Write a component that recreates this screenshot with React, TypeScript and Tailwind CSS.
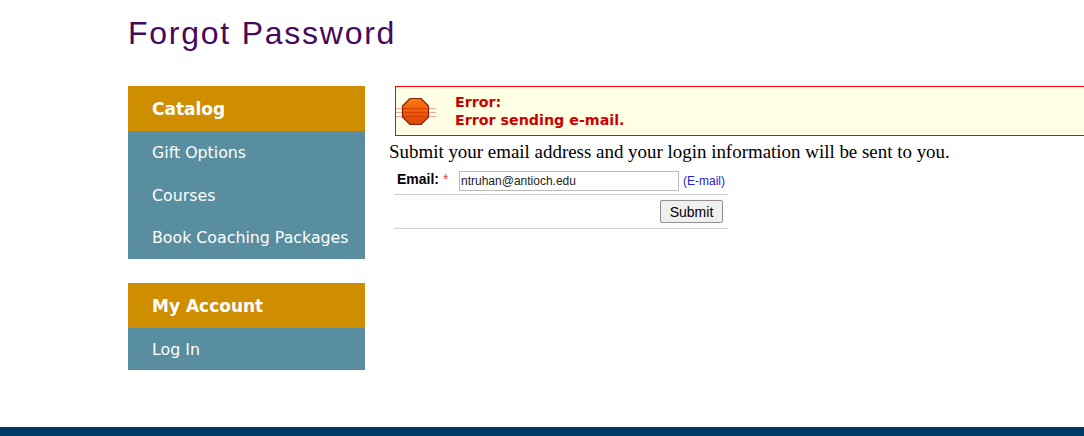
const catalogLinks = ['Gift Options', 'Courses', 'Book Coaching Packages'];
const accountLinks = ['Log In'];

const StopIcon = () => (
  <svg width="40" height="46" viewBox="0 0 40 46" className="block">
    <defs>
      <linearGradient id="stopFill" x1="0" y1="0" x2="0" y2="1">
        <stop offset="0" stopColor="#fb7a10" />
        <stop offset="0.55" stopColor="#ee5a06" />
        <stop offset="1" stopColor="#d94400" />
      </linearGradient>
    </defs>
    <g stroke="#f7a8a0" strokeWidth="1">
      <line x1="0" y1="21.5" x2="40" y2="21.5" />
      <line x1="0" y1="25.5" x2="40" y2="25.5" />
      <line x1="0" y1="29.5" x2="40" y2="29.5" />
    </g>
    <polygon points="14,11.5 25,11.5 32.5,19 32.5,30 25,37.5 14,37.5 6.5,30 6.5,19" fill="url(#stopFill)" stroke="#8c1f10" strokeWidth="1.2" strokeLinejoin="round" />
    <g stroke="#cf3c04" strokeWidth="1" opacity="0.8">
      <line x1="7" y1="21.5" x2="32" y2="21.5" />
      <line x1="7" y1="25.5" x2="32" y2="25.5" />
      <line x1="7" y1="29.5" x2="32" y2="29.5" />
    </g>
  </svg>
);

const SideMenu = ({ title, links }: { title: string; links: string[] }) => (
  <div className="w-[237px]">
    <div className="h-[45px] bg-[#cf8e00] pl-[24px] text-[17px] leading-[47px] font-bold text-white">{title}</div>
    <ul className="bg-[#588e9f] text-[15.8px] text-white">
      {links.map((link) => (
        <li key={link} className="h-[42.6px] pl-[24px] leading-[43px]">
          {link}
        </li>
      ))}
    </ul>
  </div>
);

export default function App() {
  return (
    <div className="flex h-[436px] w-[1084px] flex-col overflow-hidden bg-white font-['DejaVu_Sans',sans-serif]">
      <div className="flex-1 pl-[128px]">
        <h1 className="pt-[13px] font-['Liberation_Sans',sans-serif] text-[32px] leading-[40px] tracking-[1.75px] text-[#46095c]">
          Forgot Password
        </h1>

        <div className="mt-[33px] flex">
          {/* Sidebar */}
          <div className="flex w-[237px] flex-none flex-col gap-[24px]">
            <SideMenu title="Catalog" links={catalogLinks} />
            <SideMenu title="My Account" links={accountLinks} />
          </div>

          {/* Main */}
          <div className="ml-[24px] min-w-0 flex-1">
            <div className="ml-[6px] flex h-[50px] w-[720px] border border-[#ff0000] bg-[#ffffe3]">
              <div className="flex-none">
                <StopIcon />
              </div>
              <div className="pl-[19px] pt-[6px] text-[14.25px] leading-[18px] font-bold text-[#cc0000]">
                <div>Error:</div>
                <div>Error sending e-mail.</div>
              </div>
            </div>

            <p className="mt-[6px] font-['Liberation_Serif',serif] text-[18.93px] leading-[20px] whitespace-nowrap text-black">
              Submit your email address and your login information will be sent to you.
            </p>

            <div className="ml-[5px] mt-[6px] w-[334px] font-['Liberation_Sans',sans-serif]">
              <div className="flex h-[27px] items-center border-b border-[#d0d0d0]">
                <label className="mb-[3px] w-[65px] flex-none pl-[3px] text-[14px] font-bold text-black">
                  Email: <span className="font-normal text-[#dd4444]">*</span>
                </label>
                <input
                  type="text"
                  defaultValue="ntruhan@antioch.edu"
                  className="h-[20px] w-[220px] border border-[#bbbbbb] px-[1px] text-[12px] text-[#222222] outline-none"
                />
                <span className="ml-[4px] text-[12px] text-[#2222cc]">(E-mail)</span>
              </div>
              <div className="flex h-[34px] items-center justify-end border-b border-[#d0d0d0] pr-[5px]">
                <button className="h-[23px] w-[63px] rounded-[2px] border border-[#8f8f8f] bg-[#efefef] text-[14px] leading-none text-black">
                  Submit
                </button>
              </div>
            </div>
          </div>
        </div>
      </div>
      <div className="h-[9px] flex-none bg-[#003b66]" />
    </div>
  );
}
